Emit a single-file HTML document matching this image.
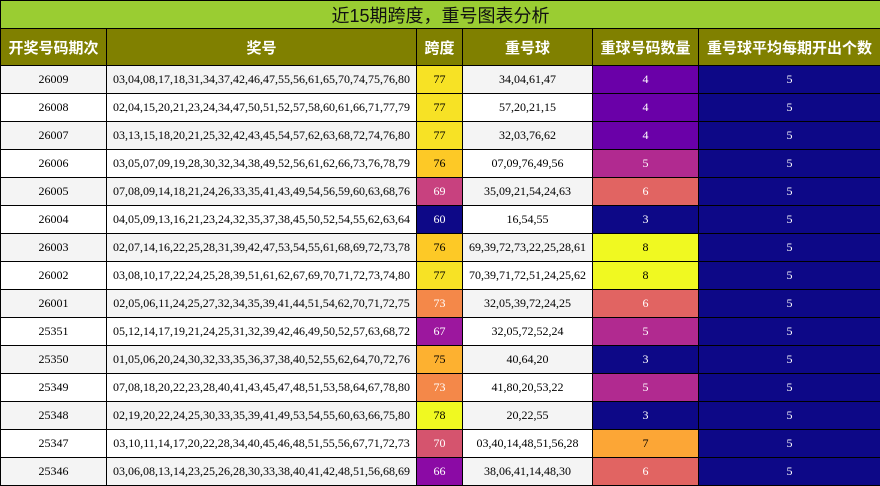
<!DOCTYPE html>
<html><head><meta charset="utf-8"><style>
*{margin:0;padding:0;box-sizing:border-box}
body{width:880px;height:486px;background:#fff;overflow:hidden;font-family:"Liberation Serif","Noto Serif CJK SC",serif}
table{border-collapse:collapse;table-layout:fixed;width:880px}
td,th{border:1px solid #000;text-align:center;font-size:12px;height:28px;padding:0;white-space:nowrap;overflow:hidden}
.t td{background:#9acd32;font-family:"Liberation Sans","Noto Sans CJK SC",sans-serif;font-size:18px;height:28px;color:#111}
th{background:#808000;color:#fff;font-family:"Liberation Sans","Noto Sans CJK SC",sans-serif;font-size:15px;font-weight:bold;height:37px}
tr.r:nth-child(odd) td.p{background:#f4f4f4}
.w{color:#fff}
</style></head><body>
<table>
<colgroup><col style="width:106px"><col style="width:310px"><col style="width:46px"><col style="width:130px"><col style="width:106px"><col style="width:182px"></colgroup>
<tr class="t"><td colspan="6">近15期跨度，重号图表分析</td></tr>
<tr><th>开奖号码期次</th><th>奖号</th><th>跨度</th><th>重号球</th><th>重球号码数量</th><th>重号球平均每期开出个数</th></tr>
<tr class="r"><td class="p">26009</td><td class="p">03,04,08,17,18,31,34,37,42,46,47,55,56,61,65,70,74,75,76,80</td><td style="background:#f7e225">77</td><td class="p">34,04,61,47</td><td class="w" style="background:#6a00a8">4</td><td class="w" style="background:#0d0887">5</td></tr>
<tr class="r"><td class="p">26008</td><td class="p">02,04,15,20,21,23,24,34,47,50,51,52,57,58,60,61,66,71,77,79</td><td style="background:#f7e225">77</td><td class="p">57,20,21,15</td><td class="w" style="background:#6a00a8">4</td><td class="w" style="background:#0d0887">5</td></tr>
<tr class="r"><td class="p">26007</td><td class="p">03,13,15,18,20,21,25,32,42,43,45,54,57,62,63,68,72,74,76,80</td><td style="background:#f7e225">77</td><td class="p">32,03,76,62</td><td class="w" style="background:#6a00a8">4</td><td class="w" style="background:#0d0887">5</td></tr>
<tr class="r"><td class="p">26006</td><td class="p">03,05,07,09,19,28,30,32,34,38,49,52,56,61,62,66,73,76,78,79</td><td style="background:#fdc926">76</td><td class="p">07,09,76,49,56</td><td class="w" style="background:#b12a90">5</td><td class="w" style="background:#0d0887">5</td></tr>
<tr class="r"><td class="p">26005</td><td class="p">07,08,09,14,18,21,24,26,33,35,41,43,49,54,56,59,60,63,68,76</td><td class="w" style="background:#c8417f">69</td><td class="p">35,09,21,54,24,63</td><td class="w" style="background:#e16462">6</td><td class="w" style="background:#0d0887">5</td></tr>
<tr class="r"><td class="p">26004</td><td class="p">04,05,09,13,16,21,23,24,32,35,37,38,45,50,52,54,55,62,63,64</td><td class="w" style="background:#0d0887">60</td><td class="p">16,54,55</td><td class="w" style="background:#0d0887">3</td><td class="w" style="background:#0d0887">5</td></tr>
<tr class="r"><td class="p">26003</td><td class="p">02,07,14,16,22,25,28,31,39,42,47,53,54,55,61,68,69,72,73,78</td><td style="background:#fdc926">76</td><td class="p">69,39,72,73,22,25,28,61</td><td style="background:#f0f921">8</td><td class="w" style="background:#0d0887">5</td></tr>
<tr class="r"><td class="p">26002</td><td class="p">03,08,10,17,22,24,25,28,39,51,61,62,67,69,70,71,72,73,74,80</td><td style="background:#f7e225">77</td><td class="p">70,39,71,72,51,24,25,62</td><td style="background:#f0f921">8</td><td class="w" style="background:#0d0887">5</td></tr>
<tr class="r"><td class="p">26001</td><td class="p">02,05,06,11,24,25,27,32,34,35,39,41,44,51,54,62,70,71,72,75</td><td class="w" style="background:#f48849">73</td><td class="p">32,05,39,72,24,25</td><td class="w" style="background:#e16462">6</td><td class="w" style="background:#0d0887">5</td></tr>
<tr class="r"><td class="p">25351</td><td class="p">05,12,14,17,19,21,24,25,31,32,39,42,46,49,50,52,57,63,68,72</td><td class="w" style="background:#9c179e">67</td><td class="p">32,05,72,52,24</td><td class="w" style="background:#b12a90">5</td><td class="w" style="background:#0d0887">5</td></tr>
<tr class="r"><td class="p">25350</td><td class="p">01,05,06,20,24,30,32,33,35,36,37,38,40,52,55,62,64,70,72,76</td><td style="background:#fdb130">75</td><td class="p">40,64,20</td><td class="w" style="background:#0d0887">3</td><td class="w" style="background:#0d0887">5</td></tr>
<tr class="r"><td class="p">25349</td><td class="p">07,08,18,20,22,23,28,40,41,43,45,47,48,51,53,58,64,67,78,80</td><td class="w" style="background:#f48849">73</td><td class="p">41,80,20,53,22</td><td class="w" style="background:#b12a90">5</td><td class="w" style="background:#0d0887">5</td></tr>
<tr class="r"><td class="p">25348</td><td class="p">02,19,20,22,24,25,30,33,35,39,41,49,53,54,55,60,63,66,75,80</td><td style="background:#f0f921">78</td><td class="p">20,22,55</td><td class="w" style="background:#0d0887">3</td><td class="w" style="background:#0d0887">5</td></tr>
<tr class="r"><td class="p">25347</td><td class="p">03,10,11,14,17,20,22,28,34,40,45,46,48,51,55,56,67,71,72,73</td><td class="w" style="background:#d5546e">70</td><td class="p">03,40,14,48,51,56,28</td><td style="background:#fca636">7</td><td class="w" style="background:#0d0887">5</td></tr>
<tr class="r"><td class="p">25346</td><td class="p">03,06,08,13,14,23,25,26,28,30,33,38,40,41,42,48,51,56,68,69</td><td class="w" style="background:#8b0aa5">66</td><td class="p">38,06,41,14,48,30</td><td class="w" style="background:#e16462">6</td><td class="w" style="background:#0d0887">5</td></tr>
</table>
</body></html>
